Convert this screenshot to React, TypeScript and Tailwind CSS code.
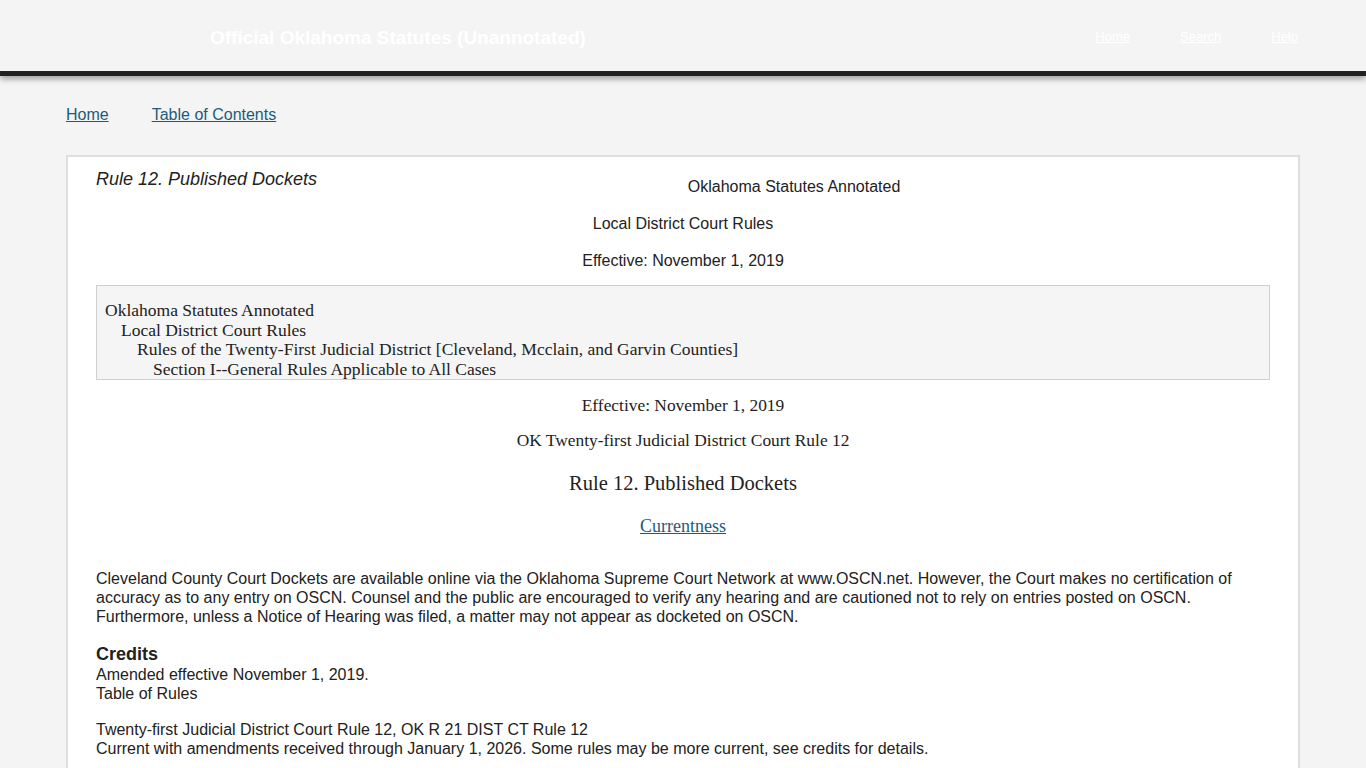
import React from "react";

const serif = "font-['Liberation_Serif',serif]";

export default function App() {
  return (
    <div className="min-h-screen bg-[#f4f4f4] font-['Liberation_Sans',Arial,sans-serif] text-[#222]">
      {/* Header */}
      <header className="h-[76px] bg-[#f4f4f4] border-b-[5px] border-[#222] shadow-[0_3px_6px_rgba(0,0,0,0.35)]">
        <div className="flex items-center h-[71px] pl-[210px] pr-[68px] pt-[3px]">
          <div className="text-white font-bold text-[19px] leading-none">Official Oklahoma Statutes (Unannotated)</div>
          <nav className="ml-auto flex gap-[50px] text-[13px] text-white">
            <a href="#" className="underline">Home</a>
            <a href="#" className="underline">Search</a>
            <a href="#" className="underline">Help</a>
          </nav>
        </div>
      </header>

      {/* Breadcrumb */}
      <div className="flex gap-[43px] px-[66px] pt-[29px] pb-[30px] text-[16px] leading-[20px]">
        <a href="#" className="text-[#1d5b7c] underline">Home</a>
        <a href="#" className="text-[#1d5b7c] underline">Table of Contents</a>
      </div>

      {/* Document card */}
      <div className="mx-[66px] bg-white border-2 border-[#dedede] px-[28px] pt-[11px] pb-[20px]">
        <div className="float-left mt-[1px] italic text-[18px] leading-[21px] pr-[1px]">Rule 12. Published Dockets</div>
        <p className="mt-[10px] text-center text-[16px] leading-[18px]">Oklahoma Statutes Annotated</p>
        <p className="clear-both mt-[19px] text-center text-[16px] leading-[18px]">Local District Court Rules</p>
        <p className="mt-[19px] text-center text-[16px] leading-[18px]">Effective: November 1, 2019</p>

        <div className={`mt-[15px] bg-[#f5f5f5] border border-[#cfcfcf] pt-[15px] pl-[8px] text-[17.5px] leading-[19.5px] ${serif}`}>
          <div>Oklahoma Statutes Annotated</div>
          <div className="pl-[16px]">Local District Court Rules</div>
          <div className="pl-[32px]">Rules of the Twenty-First Judicial District [Cleveland, Mcclain, and Garvin Counties]</div>
          <div className="pl-[48px]">Section I--General Rules Applicable to All Cases</div>
        </div>

        <div className={`text-center ${serif}`}>
          <p className="mt-[16px] text-[17.4px] leading-[19px]">Effective: November 1, 2019</p>
          <p className="mt-[16px] text-[17.4px] leading-[19px]">OK Twenty-first Judicial District Court Rule 12</p>
          <p className="mt-[21px] text-[20.5px] leading-[24px]">Rule 12. Published Dockets</p>
          <p className="mt-[22px] text-[18px] leading-[19px]">
            <a href="#" className="text-[#1d5b7c] underline">Currentness</a>
          </p>
        </div>

        <p className="mt-[33px] text-[16px] leading-[19px]">
          Cleveland County Court Dockets are available online via the Oklahoma Supreme Court Network at www.OSCN.net. However, the Court makes no certification of accuracy as to any entry on OSCN. Counsel and the public are encouraged to verify any hearing and are cautioned not to rely on entries posted on OSCN. Furthermore, unless a Notice of Hearing was filed, a matter may not appear as docketed on OSCN.
        </p>

        <div className="mt-[18px] text-[16px] leading-[19px]">
          <div className="font-bold text-[18px] leading-[21px]">Credits</div>
          <div>Amended effective November 1, 2019.</div>
          <div>Table of Rules</div>
          <div className="mt-[17px]">Twenty-first Judicial District Court Rule 12, OK R 21 DIST CT Rule 12</div>
          <div>Current with amendments received through January 1, 2026. Some rules may be more current, see credits for details.</div>
        </div>
      </div>
    </div>
  );
}
